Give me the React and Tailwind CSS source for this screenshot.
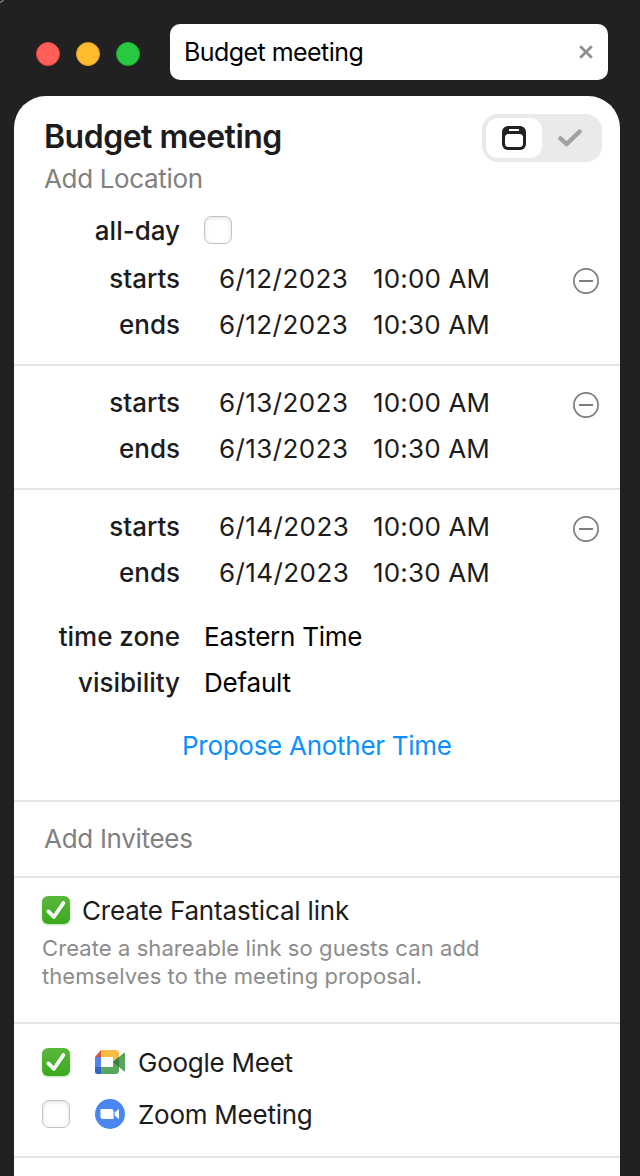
import React, { useState } from 'react';

const proposedTimes = [
    { id: 1, date: '6/12/2023', start: '10:00 AM', end: '10:30 AM' },
    { id: 2, date: '6/13/2023', start: '10:00 AM', end: '10:30 AM' },
    { id: 3, date: '6/14/2023', start: '10:00 AM', end: '10:30 AM' },
];

function Checkbox({ checked, onChange }) {
    return (
        <button
            type="button"
            role="checkbox"
            aria-checked={checked}
            onClick={() => onChange(!checked)}
            className={
                checked
                    ? 'block h-7 w-7 shrink-0 rounded-[6px] bg-linear-to-b from-[#59b83c] to-[#3aa91c] shadow-[0_1px_2px_rgba(58,169,28,0.35)]'
                    : 'block h-7 w-7 shrink-0 rounded-[7px] border border-[#c4c4c4] bg-white shadow-[inset_0_1px_4px_rgba(0,0,0,0.13)]'
            }
        >
            {checked && (
                <svg viewBox="0 0 28 28" className="h-7 w-7" fill="none" stroke="#fff" strokeWidth="3.8" strokeLinecap="round" strokeLinejoin="round">
                    <path d="M6.4 15.4 L11.8 21 L21.4 7" />
                </svg>
            )}
        </button>
    );
}

function Row({ label, children }) {
    return (
        <div className="flex h-[46px] items-center">
            <span className="w-[166px] shrink-0 text-right font-[530] tracking-[-0.02px]">{label}</span>
            {children}
        </div>
    );
}

function TimeBlock({ time }) {
    return (
        <div className="relative">
            <Row label="starts">
                <span className="ml-[39px] w-[154px] tracking-[0.42px]">{time.date}</span>
                <span className="tracking-[0.15px]">{time.start}</span>
            </Row>
            <Row label="ends">
                <span className="ml-[39px] w-[154px] tracking-[0.42px]">{time.date}</span>
                <span className="tracking-[0.15px]">{time.end}</span>
            </Row>
            <button type="button" className="absolute top-3 right-[21px]">
                <svg width="26" height="26" viewBox="0 0 26 26" fill="none" stroke="#7d7d7d">
                    <circle cx="13" cy="13" r="12.1" strokeWidth="1.7" />
                    <path d="M6 13 H20" strokeWidth="2" />
                </svg>
            </button>
        </div>
    );
}

function GoogleMeetIcon() {
    return (
        <svg width="30" height="24" viewBox="0 0 30 24">
            <path d="M6 0 H20.5 Q24 0 24 3.5 V12 L18 12 V7 H6 Z" fill="#f2bd42" />
            <path d="M18 12 H24 V20.5 Q24 24 20.5 24 H6 V17 H18 Z" fill="#58a55c" />
            <path d="M0 7 H6 V17 H0 Z" fill="#5383ec" />
            <path d="M6 0 L0 7 H6 Z" fill="#d85140" />
            <path d="M0 17 H6 V24 H2.2 Q0 24 0 21.8 Z" fill="#3064c8" />
            <path d="M18 12 L28.6 3 Q30 2.2 30 3.6 V20.4 Q30 21.8 28.6 21 Z" fill="#58a55c" />
            <path d="M18 12 L24 7 V17 Z" fill="#397e41" />
            <path d="M6 7 H18 V17 H6 Z" fill="#fff" />
        </svg>
    );
}

function ZoomIcon() {
    return (
        <svg width="30" height="30" viewBox="0 0 30 30">
            <circle cx="15" cy="15" r="15" fill="#4a86f0" />
            <path d="M5.5 10 H15.8 Q18.6 10 18.6 12.8 V20 H8.3 Q5.5 20 5.5 17.2 Z" fill="#fff" />
            <path d="M19.6 13.4 L23.2 10.4 Q24 9.8 24 10.8 V19.2 Q24 20.2 23.2 19.6 L19.6 16.6 Z" fill="#fff" />
        </svg>
    );
}

export default function App() {
    const [allDay, setAllDay] = useState(false);
    const [link, setLink] = useState(true);
    const [meet, setMeet] = useState(true);
    const [zoom, setZoom] = useState(false);
    const [query, setQuery] = useState('Budget meeting');

    return (
        <div className="relative h-[1176px] w-[640px] overflow-hidden bg-[#212121] font-['Inter',sans-serif] text-[26px] leading-[30px] text-[#1c1c1c]">
            {/* window corner highlight */}
            <svg className="absolute top-0 left-0" width="4" height="4" viewBox="0 0 4 4">
                <path d="M0 2.8 L3.6 0" stroke="#8a8a8a" strokeWidth="1.2" />
            </svg>

            {/* Title bar */}
            <div className="flex h-24 items-start pt-6 pl-9">
                <div className="mt-[18px] flex gap-4">
                    <span className="h-6 w-6 rounded-full border border-[#e0443e] bg-[#ff5f57]"></span>
                    <span className="h-6 w-6 rounded-full border border-[#dea123] bg-[#febc2e]"></span>
                    <span className="h-6 w-6 rounded-full border border-[#1aab29] bg-[#28c840]"></span>
                </div>
                <div className="ml-[30px] flex h-14 w-[438px] items-center justify-between rounded-[10px] bg-white pr-[15px] pl-[14px]">
                    <input
                        value={query}
                        onChange={(e) => setQuery(e.target.value)}
                        className="w-[300px] text-[25px] tracking-[-0.55px] text-black outline-none"
                    />
                    <button type="button" onClick={() => setQuery('')}>
                        <svg width="14" height="14" viewBox="0 0 14 14" stroke="#8f8f8f" strokeWidth="2.8">
                            <path d="M1.2 1.2 L12.8 12.8 M12.8 1.2 L1.2 12.8" />
                        </svg>
                    </button>
                </div>
            </div>

            {/* Event panel */}
            <div className="ml-[14px] h-[1080px] w-[606px] rounded-t-[32px] bg-white">
                <div className="flex h-[112px] justify-between pt-[18px] pr-[18px] pl-[30px]">
                    <div className="pt-[3px]">
                        <h1 className="text-[32px] leading-10 font-[580] tracking-[-0.5px]">Budget meeting</h1>
                        <p className="mt-[7px] tracking-[-0.35px] text-[#808080]">Add Location</p>
                    </div>
                    <div className="flex h-12 w-[120px] rounded-[16px] bg-[#eaeaea] p-1">
                        <span className="flex h-10 w-14 items-center justify-center rounded-[12px] bg-white">
                            <svg width="24" height="24" viewBox="0 0 24 24">
                                <rect width="24" height="24" rx="6" fill="#212121" />
                                <rect x="3" y="8" width="18" height="13" rx="3.5" fill="#fff" />
                                <rect x="7" y="3" width="10" height="2" fill="#fff" />
                            </svg>
                        </span>
                        <span className="flex h-10 w-14 items-center justify-center">
                            <svg width="24" height="18" viewBox="0 0 24 18" fill="none" stroke="#a1a3a2" strokeWidth="4.4" strokeLinecap="round" strokeLinejoin="round">
                                <path d="M2.4 9.4 L8.6 15.2 L21.6 2.6" />
                            </svg>
                        </span>
                    </div>
                </div>

                <div className="border-b-2 border-[#e6e6e6] pb-4">
                    <div className="mb-[2px]">
                        <Row label="all-day">
                            <span className="mb-0.5 ml-6">
                                <Checkbox checked={allDay} onChange={setAllDay} />
                            </span>
                        </Row>
                    </div>
                    <TimeBlock time={proposedTimes[0]} />
                </div>
                <div className="border-b-2 border-[#e6e6e6] pt-[14px] pb-4">
                    <TimeBlock time={proposedTimes[1]} />
                </div>
                <div className="h-[312px] border-b-2 border-[#e6e6e6] pt-[14px]">
                    <TimeBlock time={proposedTimes[2]} />
                    <div className="mt-[18px]">
                        <Row label="time zone">
                            <span className="ml-6 tracking-[-0.25px] text-black">Eastern Time</span>
                        </Row>
                        <Row label="visibility">
                            <span className="ml-6 tracking-[-0.2px] text-black">Default</span>
                        </Row>
                    </div>
                    <p className="mt-[25px] pl-[168px] tracking-[-0.28px] text-[#0a91ff]">Propose Another Time</p>
                </div>

                <div className="flex h-[76px] items-center border-b-2 border-[#e6e6e6] pl-[30px] tracking-[-0.3px] text-[#808080]">
                    Add Invitees
                </div>

                <div className="h-[146px] border-b-2 border-[#e6e6e6] pt-[18px] pl-7">
                    <div className="flex items-start">
                        <Checkbox checked={link} onChange={setLink} />
                        <span className="ml-3 tracking-[-0.17px]">Create Fantastical link</span>
                    </div>
                    <p className="mt-2 text-[22px] leading-7 tracking-[0.08px] text-[#8c8c8c]">
                        Create a shareable link so guests can add
                        <br />
                        themselves to the meeting proposal.
                    </p>
                </div>

                <div className="h-[134px] border-b-2 border-[#e6e6e6] pt-3 pl-7">
                    <div className="flex h-[52px] items-center">
                        <Checkbox checked={meet} onChange={setMeet} />
                        <span className="ml-[25px]"><GoogleMeetIcon /></span>
                        <span className="mt-0.5 ml-[13px] tracking-[-0.25px]">Google Meet</span>
                    </div>
                    <div className="flex h-[52px] items-center">
                        <Checkbox checked={zoom} onChange={setZoom} />
                        <span className="ml-[25px]"><ZoomIcon /></span>
                        <span className="mt-0.5 ml-[13px] tracking-[-0.25px]">Zoom Meeting</span>
                    </div>
                </div>
            </div>
        </div>
    );
}
